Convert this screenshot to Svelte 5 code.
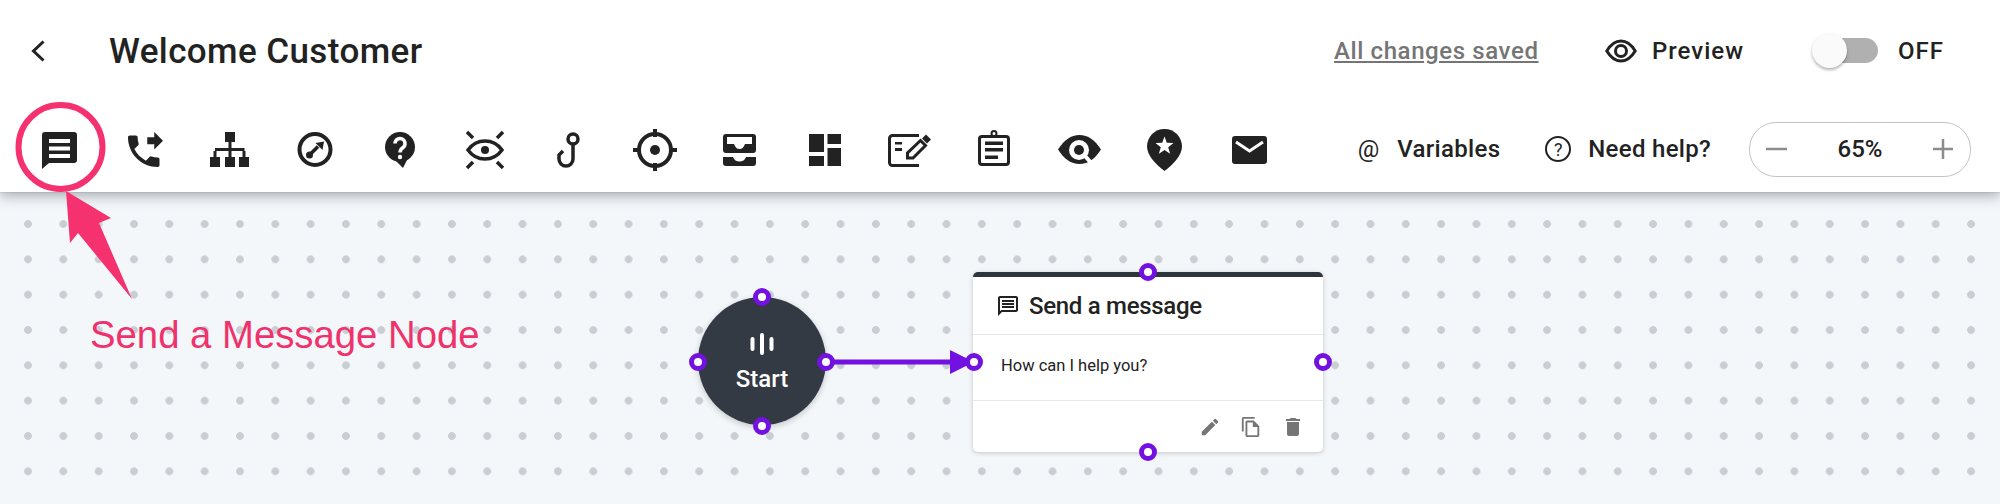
<script>
  const handles = [
    { x: 762, y: 105 },
    { x: 762, y: 234 },
    { x: 697.5, y: 170 },
    { x: 826, y: 170 },
    { x: 973.5, y: 170 },
    { x: 1323, y: 170 },
    { x: 1148, y: 80 },
    { x: 1148, y: 259.5 },
  ];

  let zoom = 65;
  let live = false;
</script>

<div class="page">
  <header class="topbar">
    <div class="row-title">
      <button class="back" aria-label="Back">
        <svg width="14" height="22" viewBox="0 0 14 22"><path d="M12.5 1.5 2.5 11l10 9.5" fill="none" stroke="#222" stroke-width="3"/></svg>
      </button>
      <h1>Welcome Customer</h1>
      <div class="title-actions">
        <span class="saved">All changes saved</span>
        <button class="preview">
          <svg width="32" height="24" viewBox="0 0 32 24" fill="none" stroke="#222" stroke-width="3"><path d="M1.8 12C6 5 10.500 2 16 2s10 3 14.200 10C26 19 21.500 22 16 22S6 19 1.800 12z"/><circle cx="16" cy="12" r="5.500"/></svg>
          Preview
        </button>
        <button class="switch" aria-label="Toggle" onclick={() => (live = !live)}>
          <span class="track"></span>
          <span class="thumb"></span>
        </button>
        <span class="state">{live ? 'ON' : 'OFF'}</span>
      </div>
    </div>

    <div class="row-tools">
      <div class="tools">
        <button class="tool" aria-label="Send a message">
          <svg viewBox="0 0 48 48"><path d="M9 7h29a3 3 0 0 1 3 3v25a3 3 0 0 1-3 3H13l-7 6V10a3 3 0 0 1 3-3z" fill="#222"/><path d="M13 14h21v4H13zM13 21.500h21v4H13zM13 29h21v4H13z" fill="#fff"/></svg>
        </button>
        <button class="tool" aria-label="Transfer call">
          <svg viewBox="0 0 48 48"><g transform="translate(1.750 5.250) scale(1.750)"><path d="M18 11l5-5-5-5v3h-4v4h4v3zm2 4.500c-1.250 0-2.450-.2-3.570-.57-.35-.11-.74-.03-1.020.24l-2.200 2.200c-2.830-1.440-5.150-3.750-6.590-6.590l2.200-2.210c.28-.26.36-.65.25-1C8.700 6.450 8.500 5.250 8.500 4c0-.55-.45-1-1-1H4c-.55 0-1 .45-1 1 0 9.390 7.610 17 17 17 .55 0 1-.45 1-1v-3.500c0-.55-.45-1-1-1z" fill="#222"/></g></svg>
        </button>
        <button class="tool" aria-label="Branch">
          <svg viewBox="0 0 48 48" fill="#222"><path d="M19 7h10v10H19zM22.500 17h3v6h-3zM9 23h29.500v3H9zM7.500 26h3v6h-3zM22.500 26h3v6h-3zM36.500 26h3v6h-3zM4 32h10v10H4zM19 32h10v10H19zM33 32h10v10H33z"/></svg>
        </button>
        <button class="tool" aria-label="Jump">
          <svg viewBox="0 0 48 48"><circle cx="24" cy="24.500" r="15.500" fill="none" stroke="#222" stroke-width="4"/><path d="M18 30.500 27 21.500" stroke="#222" stroke-width="3.500"/><circle cx="18.500" cy="30" r="3.500" fill="#222"/><path d="M24.500 18 33 16.500 31.500 25z" fill="#222"/></svg>
        </button>
        <button class="tool" aria-label="Question">
          <svg viewBox="0 0 48 48"><circle cx="24" cy="22" r="15" fill="#222"/><path d="M17 33h15l-5 10z" fill="#222"/><path d="M19 18.500a5 5 0 1 1 8 4c-2 1.500-3 2.500-3 5" fill="none" stroke="#fff" stroke-width="3.500"/><circle cx="24" cy="32" r="2.200" fill="#fff"/></svg>
        </button>
        <button class="tool" aria-label="Watch">
          <svg viewBox="0 0 48 48" fill="none" stroke="#222" stroke-width="3.500"><path d="M7 25c5-7 11-9 17-9s12 2 17 9c-5 7-11 9-17 9S12 32 7 25z"/><path d="M6 7l6 6M42 7l-6 6M6 43l6-6M42 43l-6-6"/><circle cx="24" cy="25" r="4" fill="#222" stroke="none"/></svg>
        </button>
        <button class="tool" aria-label="Hook">
          <svg viewBox="0 0 48 48" fill="none" stroke="#222" stroke-width="3.500"><circle cx="27" cy="14" r="5"/><path d="M27 19.500V34a7 7 0 0 1-14 0v-4l4-4"/></svg>
        </button>
        <button class="tool" aria-label="Target">
          <svg viewBox="0 0 48 48" fill="none" stroke="#222" stroke-width="4"><circle cx="24" cy="25" r="16"/><path d="M24 4v8M24 38v8M2 25h8M38 25h8"/><circle cx="24" cy="25" r="5" fill="#222" stroke="none"/></svg>
        </button>
        <button class="tool" aria-label="Inbox">
          <svg viewBox="0 0 48 48"><path fill="#222" fill-rule="evenodd" d="M10 9h27a3 3 0 0 1 3 3v13a3 3 0 0 1-3 3H10a3 3 0 0 1-3-3V12a3 3 0 0 1 3-3zM11 12v7h7c1 3 3 5 5.500 5s4.500-2 5.500-5h7v-7z"/><path fill="#222" d="M7 32h10c1 3 3.500 4.500 6.500 4.500S29 35 30 32h10v6a3 3 0 0 1-3 3H10a3 3 0 0 1-3-3z"/></svg>
        </button>
        <button class="tool" aria-label="Layout">
          <svg viewBox="0 0 48 48" fill="#222"><path d="M8 9h15v18H8zM8 31h15v10H8zM26.500 9H40v10H26.500zM26.500 23H40v18H26.500z"/></svg>
        </button>
        <button class="tool" aria-label="Form">
          <svg viewBox="0 0 48 48"><path d="M33 10.500H6.500a3 3 0 0 0-3 3v24a3 3 0 0 0 3 3H33" fill="none" stroke="#222" stroke-width="3"/><path d="M9 17h7v2.500H9zM9 23h7v3H9zM40 9.500l5 5-4 4-5-5z" fill="#222"/><path d="M34.500 15.500l5 5L27 33h-5.500v-5z" fill="none" stroke="#222" stroke-width="3"/></svg>
        </button>
        <button class="tool" aria-label="Clipboard">
          <svg viewBox="0 0 48 48"><rect x="8.500" y="11.500" width="29" height="28" rx="2.500" fill="none" stroke="#222" stroke-width="3"/><circle cx="23" cy="8.500" r="2.500" fill="none" stroke="#222" stroke-width="2"/><path d="M14 16.500h18v3.500H14zM14 23h18v3.500H14zM14 30.500h13V34H14z" fill="#222"/></svg>
        </button>
        <button class="tool" aria-label="Inspect">
          <svg viewBox="0 0 48 48"><path d="M2 24.500C8 15 15 10 23.500 10S39 15 45 24.500C39 34 32 39 23.500 39S8 34 2 24.500z" fill="#222"/><circle cx="23" cy="25" r="10" fill="#fff"/><circle cx="23" cy="25" r="5" fill="#222"/><path d="M29.500 31.500 36.500 39.500" stroke="#fff" stroke-width="4"/></svg>
        </button>
        <button class="tool" aria-label="Location">
          <svg viewBox="0 0 48 48"><path d="M23.500 4C13.800 4 6 11.800 6 21.500c0 9 9 18 17.500 24.500C32 39.500 41 30.500 41 21.500 41 11.800 33.200 4 23.500 4z" fill="#222"/><path d="M23.500 11.500l2.300 6.300 6.700.3-5.300 4.100 1.900 6.500-5.600-3.800-5.600 3.800 1.900-6.500-5.300-4.100 6.700-.3z" fill="#fff"/></svg>
        </button>
        <button class="tool" aria-label="Email">
          <svg viewBox="0 0 48 48"><rect x="6" y="11" width="35" height="28" rx="3" fill="#222"/><path d="M10 17l13.500 9L37 17" fill="none" stroke="#fff" stroke-width="3"/></svg>
        </button>
      </div>

      <div class="tool-actions">
        <button class="link"><span class="at">@</span>Variables</button>
        <button class="link help">
          <span class="qmark">?</span>Need help?
        </button>
        <div class="zoom">
          <button aria-label="Zoom out" onclick={() => (zoom -= 5)}>
            <svg width="22" height="22" viewBox="0 0 22 22"><path d="M0 11h21" stroke="#8c8c8c" stroke-width="2.500"/></svg>
          </button>
          <span>{zoom}%</span>
          <button aria-label="Zoom in" onclick={() => (zoom += 5)}>
            <svg width="22" height="22" viewBox="0 0 22 22"><path d="M1 11h20M11 1v20" stroke="#8c8c8c" stroke-width="2.500"/></svg>
          </button>
        </div>
      </div>
    </div>
  </header>

  <main class="canvas">
    <div class="dots"></div>

    <div class="start">
      <svg width="24" height="22" viewBox="0 0 24 22" fill="none" stroke="#fff" stroke-width="4" stroke-linecap="round"><path d="M2.500 6v10M12 2v18M21.500 6v10"/></svg>
      <span>Start</span>
    </div>

    <svg class="edge" width="160" height="40" viewBox="0 0 160 40">
      <path d="M0 20h130" stroke="#7311e0" stroke-width="5"/>
      <path d="M124 8l24 12-24 12z" fill="#7311e0"/>
    </svg>

    <article class="card">
      <div class="card-head">
        <svg width="20" height="20" viewBox="2 2 20 20" fill="#222"><path d="M20 2H4c-1.100 0-2 .9-2 2v18l4-4h14c1.100 0 2-.9 2-2V4c0-1.100-.9-2-2-2zm0 14H5.170L4 17.170V4h16v12zM6 6h12v2H6zM6 9h12v2H6zM6 12h12v2H6z"/></svg>
        <h2>Send a message</h2>
      </div>
      <p class="card-body">How can I help you?</p>
      <div class="card-foot">
        <svg width="22" height="22" viewBox="0 0 24 24" fill="#757575"><path d="M3 17.250V21h3.750L17.810 9.940l-3.750-3.750L3 17.250zM20.710 7.040c.39-.39.39-1.020 0-1.410l-2.340-2.340c-.39-.39-1.020-.39-1.410 0l-1.830 1.830 3.750 3.750 1.830-1.830z"/></svg>
        <svg width="22" height="22" viewBox="0 0 24 24" fill="#757575"><path d="M16 1H4c-1.100 0-2 .9-2 2v14h2V3h12V1zm-1 4H8c-1.100 0-1.990.9-1.990 2L6 21c0 1.100.89 2 1.990 2H19c1.100 0 2-.9 2-2V11l-6-6zM8 21V7h6v5h5v9H8z"/></svg>
        <svg width="24" height="24" viewBox="0 0 24 24" fill="#757575"><path d="M6 19c0 1.100.9 2 2 2h8c1.100 0 2-.9 2-2V7H6v12zM19 4h-3.500l-1-1h-5l-1 1H5v2h14V4z"/></svg>
      </div>
    </article>

    {#each handles as h}
      <span class="handle" style="left: {h.x}px; top: {h.y}px"></span>
    {/each}

    <span class="callout">Send a Message Node</span>
  </main>

  <svg class="marks" width="160" height="310" viewBox="0 0 160 310">
    <circle cx="60.500" cy="147" r="42" fill="none" stroke="#f5316f" stroke-width="6"/>
    <path d="M66 191 111 218 99 223 132 299 78 233 70 243z" fill="#f5316f"/>
  </svg>
</div>

<style>
  :global(body) { background: #f3f7fa; }
  .page {
    position: relative;
    width: 2000px;
    height: 504px;
    overflow: hidden;
    font-family: Roboto, "Liberation Sans", sans-serif;
    color: #222;
  }
  button {
    background: none;
    border: none;
    padding: 0;
    font: inherit;
    color: inherit;
    cursor: pointer;
  }

  .topbar {
    position: relative;
    z-index: 1;
    height: 192px;
    background: #fff;
    box-shadow: 0 0 1px rgba(0,0,0,0.35), 0 3px 13px rgba(40,50,60,0.42);
  }
  .row-title {
    display: flex;
    align-items: center;
    box-sizing: border-box;
    height: 101px;
    padding: 1px 56px 0 31px;
  }
  .back { display: flex; margin-right: 64px; }
  h1 { margin: 0; font-size: 35px; font-weight: 500; letter-spacing: 0.4px; }
  .title-actions { display: flex; align-items: center; margin-left: auto; }
  .saved {
    font-size: 24px;
    font-weight: 500;
    letter-spacing: 0.6px;
    color: #757575;
    text-decoration: underline;
    margin-right: 66px;
  }
  .preview {
    display: flex;
    align-items: center;
    gap: 15.500px;
    font-size: 24px;
    font-weight: 500;
    letter-spacing: 1px;
    margin-right: 68px;
  }
  .switch { position: relative; width: 66px; height: 36px; margin-right: 20px; }
  .track {
    position: absolute;
    right: 0;
    top: 5px;
    width: 60px;
    height: 25px;
    border-radius: 13px;
    background: #b0b0b0;
  }
  .thumb {
    position: absolute;
    left: 0;
    top: 0;
    width: 35px;
    height: 35px;
    border-radius: 50%;
    background: #fafafa;
    box-shadow: 0 2px 3px rgba(0,0,0,0.3);
  }
  .state { font-size: 24px; font-weight: 500; letter-spacing: 1px; }

  .row-tools {
    display: flex;
    align-items: center;
    height: 86px;
    padding: 5px 29px 0 17.5px;
  }
  .tools { display: flex; }
  .tool { display: flex; justify-content: center; width: 85px; }
  .tool svg { width: 48px; height: 48px; }
  .tool-actions { display: flex; align-items: center; margin-left: auto; }
  .link {
    display: flex;
    align-items: center;
    font-size: 24px;
    font-weight: 500;
    letter-spacing: 0.3px;
  }
  .at { font-size: 24px; font-weight: 400; margin-right: 18px; letter-spacing: 0; }
  .help { margin-left: 45px; margin-right: 38px; }
  .qmark {
    display: flex;
    align-items: center;
    justify-content: center;
    width: 26px;
    height: 26px;
    box-sizing: border-box;
    border: 2.5px solid #222;
    border-radius: 50%;
    margin-right: 17px;
    font-size: 18px;
    font-weight: 400;
    letter-spacing: 0;
  }
  .zoom {
    display: flex;
    align-items: center;
    justify-content: space-between;
    box-sizing: border-box;
    width: 222px;
    height: 55px;
    padding: 0 16px;
    border: 1.500px solid #c4c4c4;
    border-radius: 27px;
    font-size: 24px;
    font-weight: 500;
  }
  .zoom button { display: flex; }

  .canvas {
    position: relative;
    height: 312px;
    background: #f3f7fa;
  }
  .dots {
    position: absolute;
    left: 0;
    right: 0;
    top: 28px;
    height: 256px;
    background-image: radial-gradient(circle, #c9ced4 3.500px, transparent 4.200px);
    background-size: 35.330px 35.330px;
    background-position: 10.330px -13.665px;
  }
  .start {
    position: absolute;
    left: 698px;
    top: 105px;
    width: 128px;
    height: 128px;
    display: flex;
    flex-direction: column;
    align-items: center;
    justify-content: center;
    gap: 10px;
    padding-top: 3px;
    box-sizing: border-box;
    border-radius: 50%;
    background: #343a43;
    box-shadow: 0 2px 6px rgba(0,0,0,0.2);
    color: #fff;
    font-size: 24px;
    font-weight: 500;
  }
  .edge { position: absolute; left: 826px; top: 150px; }
  .card {
    position: absolute;
    left: 973px;
    top: 80px;
    width: 350px;
    height: 180px;
    box-sizing: border-box;
    border-top: 5px solid #2f353d;
    border-radius: 5px;
    background: #fff;
    box-shadow: 0 1px 5px rgba(0,0,0,0.2);
  }
  .card-head {
    display: flex;
    align-items: center;
    gap: 11px;
    height: 57px;
    padding-left: 25px;
    border-bottom: 1.500px solid #e8e8e8;
  }
  h2 { margin: 0; font-size: 24px; font-weight: 500; letter-spacing: -0.3px; }
  .card-body {
    box-sizing: border-box;
    height: 66px;
    margin: 0;
    padding: 20px 0 0 28px;
    border-bottom: 1.500px solid #e8e8e8;
    font-size: 16.500px;
    line-height: 22px;
  }
  .card-foot {
    display: flex;
    align-items: center;
    justify-content: flex-end;
    gap: 19px;
    height: 52px;
    padding-right: 18px;
  }
  .handle {
    position: absolute;
    box-sizing: border-box;
    width: 18px;
    height: 18px;
    margin: -9px 0 0 -9px;
    border: 5px solid #7311e0;
    border-radius: 50%;
    background: #fff;
  }
  .callout {
    position: absolute;
    left: 90px;
    top: 121px;
    font-family: "Liberation Sans", Arial, sans-serif;
    font-size: 38.300px;
    color: #f0326c;
    white-space: nowrap;
  }
  .marks { position: absolute; left: 0; top: 0; z-index: 2; pointer-events: none; }
</style>
